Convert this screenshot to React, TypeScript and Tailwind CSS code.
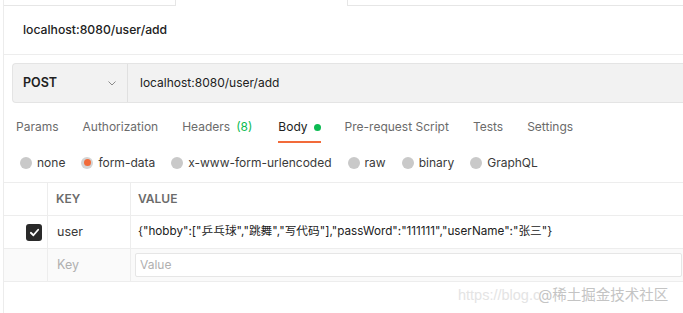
import React from 'react';

const tabs = [
  { label: 'Params' },
  { label: 'Authorization' },
  { label: 'Headers', count: '(8)' },
  { label: 'Body', active: true },
  { label: 'Pre-request Script' },
  { label: 'Tests' },
  { label: 'Settings' },
];

const bodyTypes = ['none', 'form-data', 'x-www-form-urlencoded', 'raw', 'binary', 'GraphQL'];

const Radio: React.FC<{ checked?: boolean }> = ({ checked }) =>
  checked ? (
    <span className="w-[12px] h-[12px] rounded-full bg-[#d4d4d4] flex items-center justify-center">
      <span className="w-[7px] h-[7px] rounded-full bg-[#f26b3a]"></span>
    </span>
  ) : (
    <span className="w-[12px] h-[12px] rounded-full bg-[#c9c9c9]"></span>
  );

const App: React.FC = () => {
  return (
    <div className="relative w-[683px] h-[313px] bg-white overflow-hidden font-['Inter','Noto_Sans_CJK_SC',sans-serif] text-[#212121]">
      <div className="ml-[3px] h-full border-l border-[#ececec]">
        {/* top tab strip */}
        <div className="flex h-[6px]">
          <div className="w-[171px] border-b border-[#e6e6e6]"></div>
          <div className="w-[173px] border-x border-[#e6e6e6]"></div>
          <div className="flex-1 border-b border-[#e6e6e6]"></div>
        </div>

        {/* title */}
        <div className="h-[49px] flex items-center pl-[19px] border-b border-[#ededed] text-[12.2px] font-medium">
          localhost:8080/user/add
        </div>

        {/* request bar */}
        <div className="mt-[8px] ml-[8px] h-[40px] flex bg-[#f2f2f2] border border-[#e4e4e4] border-r-0 rounded-l-[4px]">
          <div className="w-[115px] flex items-center justify-between pl-[10px] pr-[10px] border-r border-[#e0e0e0]">
            <span className="text-[12.5px] font-semibold">POST</span>
            <svg width="10" height="10" viewBox="0 0 10 10" className="text-[#8a8a8a]">
              <path d="M1.5 3.5 L5 7 L8.5 3.5" fill="none" stroke="currentColor" strokeWidth="1" />
            </svg>
          </div>
          <div className="flex items-center pl-[12px] text-[12px]">localhost:8080/user/add</div>
        </div>

        {/* request tabs */}
        <div className="mt-[10px] flex pl-[12px] gap-[24px] text-[12px]">
          {tabs.map((t) => (
            <div
              key={t.label}
              className={`h-[30px] pt-[5px] leading-[18px] border-b-2 flex items-start ${
                t.active ? 'border-[#f26b3a] text-[#212121]' : 'border-transparent text-[#6b6b6b]'
              }`}
            >
              {t.label}
              {t.count && <span className="ml-[6px] mr-[2px] text-[#0cbb52]">{t.count}</span>}
              {t.active && <span className="ml-[6px] mt-[6px] w-[7px] h-[7px] rounded-full bg-[#0cbb52]"></span>}
            </div>
          ))}
        </div>

        {/* body types */}
        <div className="h-[40px] flex items-center pl-[16px] gap-[16px] text-[12px] text-[#3a3a3a] border-b border-[#ededed]">
          {bodyTypes.map((b) => (
            <div key={b} className="flex items-center gap-[5px]">
              <Radio checked={b === 'form-data'} />
              <span>{b}</span>
            </div>
          ))}
        </div>

        {/* key / value table */}
        <div className="text-[12.5px]">
          <div className="h-[33px] flex border-b border-[#ededed] font-semibold text-[12px] text-[#6b6b6b]">
            <div className="w-[44px] border-r border-[#ededed]"></div>
            <div className="w-[83px] flex items-center pl-[8px] border-r border-[#ededed]">KEY</div>
            <div className="flex-1 flex items-center pl-[7px]">VALUE</div>
          </div>
          <div className="h-[33px] flex border-b border-[#ededed]">
            <div className="w-[44px] flex items-center justify-end pr-[5px] border-r border-[#ededed]">
              <span className="w-[16px] h-[17px] rounded-[3px] bg-[#2a2a2a] flex items-center justify-center">
                <svg width="11" height="11" viewBox="0 0 12 12">
                  <path d="M2 6.3 L4.8 9 L10 3" fill="none" stroke="white" strokeWidth="2" strokeLinecap="round" strokeLinejoin="round" />
                </svg>
              </span>
            </div>
            <div className="w-[83px] flex items-center pl-[9px] border-r border-[#ededed] text-[#3a3a3a]">user</div>
            <div className="flex-1 flex items-center pl-[7px] whitespace-nowrap text-[11.7px]">
              {'{"hobby":["乒乓球","跳舞","写代码"],"passWord":"111111","userName":"张三"}'}
            </div>
          </div>
          <div className="h-[33px] flex border-b border-[#ededed] bg-[#fafafa]">
            <div className="w-[44px] border-r border-[#ededed]"></div>
            <div className="w-[83px] flex items-center pl-[9px] border-r border-[#ededed] text-[#b0b0b0]">Key</div>
            <div className="flex-1 flex items-center pl-[4px] pr-[1px]">
              <div className="h-[24px] w-full bg-white border border-[#e6e6e6] rounded-[2px] flex items-center pl-[4px] text-[#b0b0b0] text-[12px]">
                Value
              </div>
            </div>
          </div>
        </div>
      </div>

      {/* watermark */}
      <div className="absolute left-[458px] top-[285px] flex items-center text-[14.5px] leading-[20px] whitespace-nowrap">
        <span className="text-[#e4e4e4] font-['Liberation_Sans',sans-serif]">https://blog.c</span>
        <span className="-ml-[2px] text-[#c4c4c4] [text-shadow:0_0_2px_#fff,0_0_2px_#fff]">@稀土掘金技术社区</span>
      </div>
    </div>
  );
};

export default App;
